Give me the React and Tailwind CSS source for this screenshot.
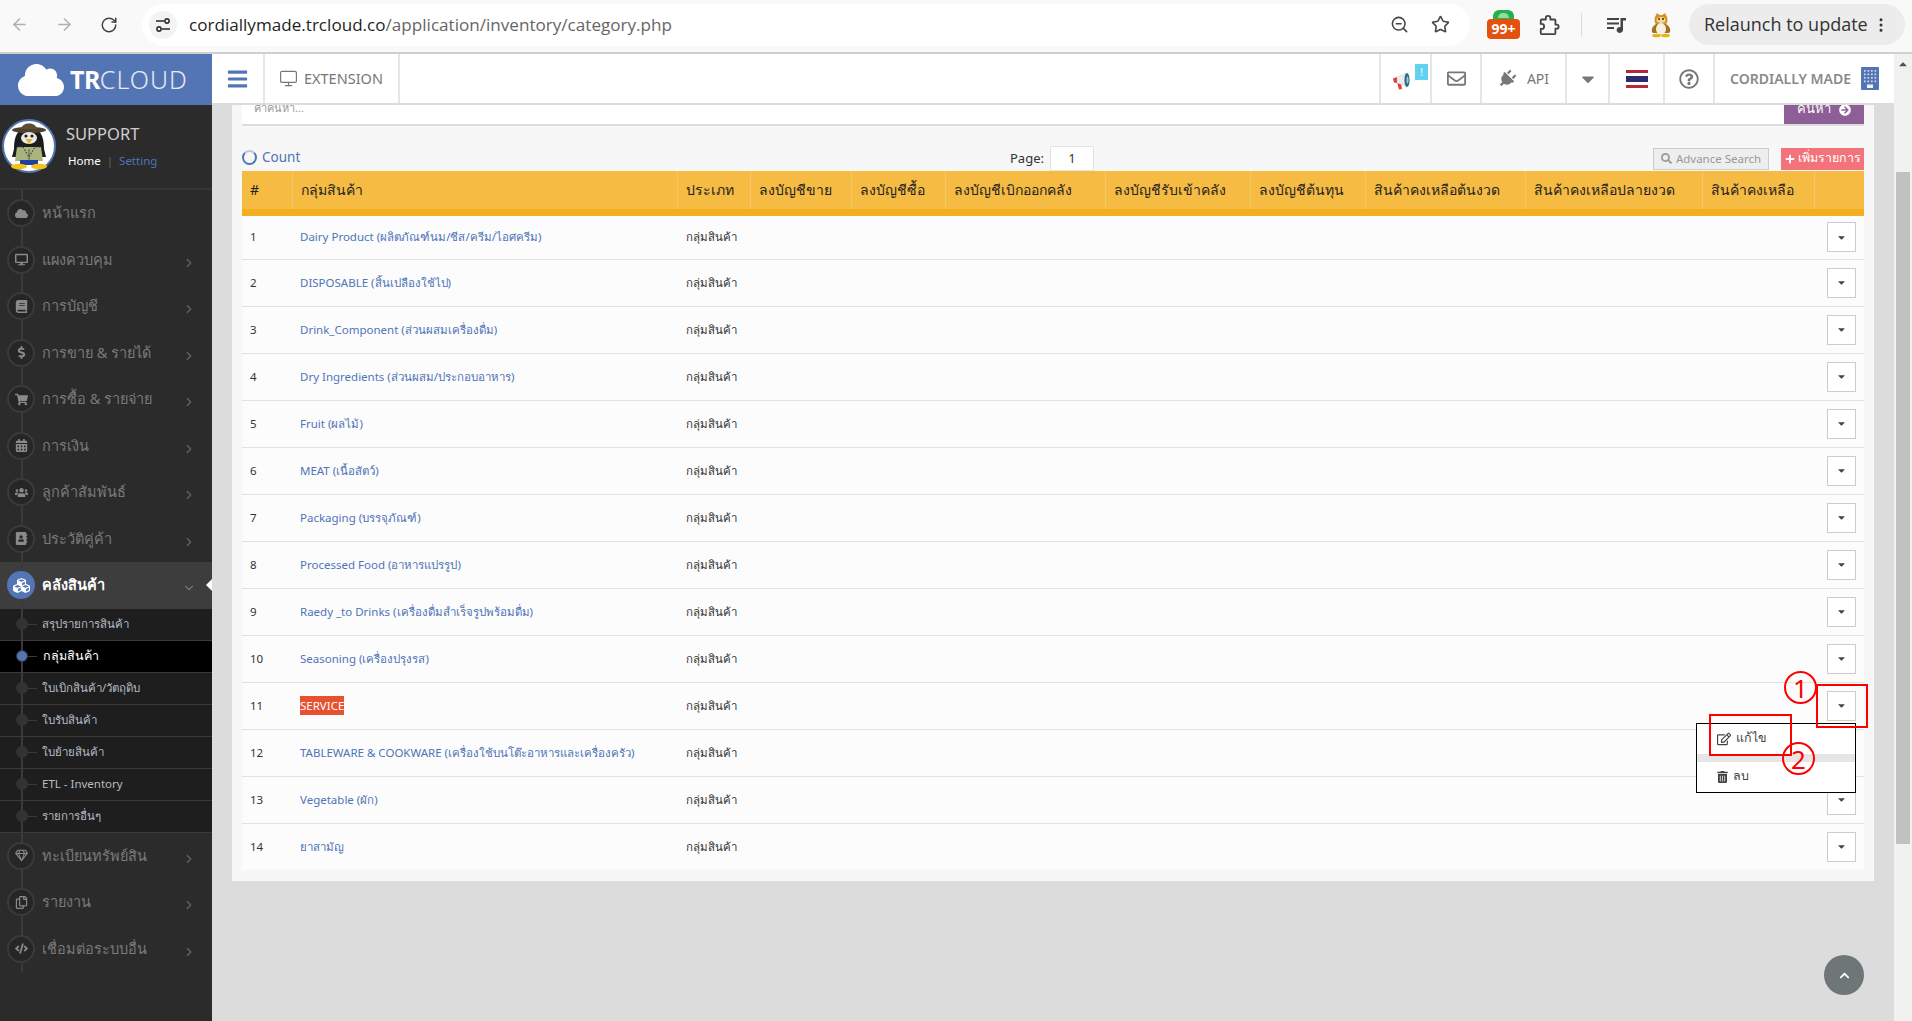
import React from 'react';
import {
  FaAddressBook, FaArrowCircleRight, FaBars, FaBook, FaCalendarAlt, FaCaretDown, FaChevronUp, FaCloud, FaCode,
  FaCubes, FaDollarSign, FaPlug, FaPlus, FaRegCopy, FaRegEdit, FaRegEnvelope, FaRegGem, FaRegQuestionCircle, FaSearch,
  FaShoppingCart, FaTrashAlt, FaUsers, FaDesktop, FaCaretUp,
} from 'react-icons/fa';
import { ArrowLeft, ArrowRight, ChevronDown, ChevronRight, EllipsisVertical, Monitor, RotateCw, Star, ZoomOut } from 'lucide-react';

const menuTop = [
  { label: 'หน้าแรก', icon: FaCloud, noArrow: true },
  { label: 'แผงควบคุม', icon: FaDesktop },
  { label: 'การบัญชี', icon: FaBook },
  { label: 'การขาย & รายได้', icon: FaDollarSign },
  { label: 'การซื้อ & รายจ่าย', icon: FaShoppingCart },
  { label: 'การเงิน', icon: FaCalendarAlt },
  { label: 'ลูกค้าสัมพันธ์', icon: FaUsers },
  { label: 'ประวัติคู่ค้า', icon: FaAddressBook },
];

const menuBottom = [
  { label: 'ทะเบียนทรัพย์สิน', icon: FaRegGem },
  { label: 'รายงาน', icon: FaRegCopy },
  { label: 'เชื่อมต่อระบบอื่น', icon: FaCode },
];

const subMenu = ['สรุปรายการสินค้า', 'กลุ่มสินค้า', 'ใบเบิกสินค้า/วัตถุดิบ', 'ใบรับสินค้า', 'ใบย้ายสินค้า', 'ETL - Inventory', 'รายการอื่นๆ'];

const columns = [
  { label: '#', w: 'w-[50px]' },
  { label: 'กลุ่มสินค้า', w: 'w-[385px]' },
  { label: 'ประเภท', w: 'w-[73px]' },
  { label: 'ลงบัญชีขาย', w: 'w-[101px]' },
  { label: 'ลงบัญชีซื้อ', w: 'w-[94px]' },
  { label: 'ลงบัญชีเบิกออกคลัง', w: 'w-[160px]' },
  { label: 'ลงบัญชีรับเข้าคลัง', w: 'w-[145px]' },
  { label: 'ลงบัญชีต้นทุน', w: 'w-[115px]' },
  { label: 'สินค้าคงเหลือต้นงวด', w: 'w-[160px]' },
  { label: 'สินค้าคงเหลือปลายงวด', w: 'w-[177px]' },
  { label: 'สินค้าคงเหลือ', w: 'w-[112px]' },
  { label: '', w: 'w-[50px]' },
];

const rows = [
  'Dairy Product (ผลิตภัณฑ์นม/ชีส/ครีม/ไอศครีม)',
  'DISPOSABLE (สิ้นเปลืองใช้ไป)',
  'Drink_Component (ส่วนผสมเครื่องดื่ม)',
  'Dry Ingredients (ส่วนผสม/ประกอบอาหาร)',
  'Fruit (ผลไม้)',
  'MEAT (เนื้อสัตว์)',
  'Packaging (บรรจุภัณฑ์)',
  'Processed Food (อาหารแปรรูป)',
  'Raedy _to Drinks (เครื่องดื่มสำเร็จรูปพร้อมดื่ม)',
  'Seasoning (เครื่องปรุงรส)',
  'SERVICE',
  'TABLEWARE & COOKWARE (เครื่องใช้บนโต๊ะอาหารและเครื่องครัว)',
  'Vegetable (ผัก)',
  'ยาสามัญ',
];

const Penguin = () => (
  <svg viewBox="0 0 54 54" className="h-[54px] w-[54px]">
    <circle cx="27" cy="27" r="26" fill="#fff" stroke="#5475b3" strokeWidth="2" />
    <path d="M12 30 C12 16 16 9 27 9 C38 9 42 16 42 30 L44 38 L10 38 Z" fill="#1c1c1c" />
    <ellipse cx="27" cy="11" rx="17" ry="3.2" fill="#4e412e" />
    <path d="M19 10 C20 2.5 34 2.5 35 10 Z" fill="#5e4e38" />
    <ellipse cx="27" cy="19" rx="8" ry="6" fill="#e9e9e9" />
    <circle cx="24" cy="17" r="1.6" fill="#222" />
    <circle cx="30" cy="17" r="1.6" fill="#222" />
    <path d="M23.5 20 L30.5 20 L27 25 Z" fill="#e8b21f" />
    <path d="M15 28 L39 28 L41 42 L13 42 Z" fill="#a9b37e" />
    <path d="M15 28 L21 28 L27 38 L33 28 L39 28" fill="none" stroke="#3c3c6a" strokeWidth="1.2" strokeDasharray="1.5 1.5" />
    <path d="M26.5 30 L27.5 30 L27.5 42 L26.5 42 Z" fill="#5c6640" />
    <rect x="18" y="41" width="18" height="5" fill="#1f3f9c" />
    <ellipse cx="17" cy="47.5" rx="8" ry="2.8" fill="#f3c315" />
    <ellipse cx="37" cy="47.5" rx="8" ry="2.8" fill="#f3c315" />
  </svg>
);

const AppBadge = () => (
  <div className="relative h-[29px] w-[33px]">
    <div className="absolute left-[6px] top-0 h-[12px] w-[21px] rounded-t-[6px] bg-[#22b14c]">
      <div className="mx-auto mt-[3px] h-[5px] w-[11px] rounded-t-full bg-[#8fdca4]" />
    </div>
    <div className="absolute bottom-0 left-0 flex h-[20px] w-[33px] items-center justify-center rounded-[4px] bg-[#e4510f] text-[14px] font-bold leading-none text-white">99+</div>
  </div>
);

const TuneIcon = () => (
  <svg viewBox="0 0 16 16" className="h-[16px] w-[16px]" fill="none" stroke="#333" strokeWidth="1.6">
    <path d="M1 4 H9" />
    <circle cx="12" cy="4" r="2.1" />
    <path d="M15 12 H7" />
    <circle cx="4" cy="12" r="2.1" />
  </svg>
);

const ExtensionIcon = () => (
  <svg viewBox="0 0 24 24" className="h-[22px] w-[22px]" fill="none" stroke="#444" strokeWidth="2" strokeLinejoin="round">
    <path d="M20.5 11.5H19V7c0-.6-.4-1-1-1h-4.5V4.5C13.500 3.100 12.400 2 11 2S8.500 3.100 8.500 4.500V6H4c-.6 0-1 .4-1 1v3.800h1c1.500 0 2.700 1.200 2.700 2.700s-1.200 2.700-2.700 2.700H3V21c0 .6.4 1 1 1h14c.6 0 1-.4 1-1v-5h1.500c1.100 0 2-.9 2-2.200s-.9-2.300-2-2.300z" />
  </svg>
);

const QueueMusicIcon = () => (
  <svg viewBox="0 0 20 18" className="h-[18px] w-[20px]" fill="#444">
    <rect x="0" y="2" width="12" height="2" />
    <rect x="0" y="6.500" width="12" height="2" />
    <rect x="0" y="11" width="7" height="2" />
    <path d="M13.500 2 H19 V4.500 H16 V13.500 A3.200 3 0 1 1 13.500 11 Z" />
  </svg>
);

const CatPenguin = () => (
  <svg viewBox="0 0 22 26" className="h-[26px] w-[22px]">
    <path d="M5 5 L7 1 L9.500 3 H12.500 L15 1 L17 5 C18 8 17.500 11 16 12 H6 C4.500 11 4 8 5 5 Z" fill="#d98f22" />
    <path d="M6 12 C1 15 1 20 3 21 H19 C21 20 21 15 16 12 Z" fill="#a5701f" />
    <ellipse cx="11" cy="17" rx="5" ry="6" fill="#f4f0e4" />
    <ellipse cx="11" cy="8" rx="4.500" ry="3" fill="#f3d88c" />
    <circle cx="9" cy="7" r="1" fill="#333" />
    <circle cx="13" cy="7" r="1" fill="#333" />
    <ellipse cx="6.500" cy="23.500" rx="4.500" ry="1.800" fill="#e9b318" />
    <ellipse cx="15.500" cy="23.500" rx="4.500" ry="1.800" fill="#e9b318" />
  </svg>
);

const Megaphone = () => (
  <svg viewBox="0 0 18 18" className="h-[18px] w-[18px]">
    <path d="M4 10 L8 11 L9 17 L6 17.500 Z" fill="#e53935" />
    <path d="M0 6.500 L4 5 L4 11 L1 10.500 Z" fill="#e53935" />
    <path d="M4 5 L13 1.500 L13 14 L4 11 Z" fill="#ececec" stroke="#bdbdbd" strokeWidth="0.400" />
    <ellipse cx="14" cy="8" rx="2.600" ry="7" fill="#2d6c88" />
    <ellipse cx="14.500" cy="8" rx="1" ry="3.500" fill="#a7c4d1" />
  </svg>
);

const ThaiFlag = () => (
  <svg viewBox="0 0 22 18" className="h-[18px] w-[22px]">
    <rect width="22" height="18" fill="#ffffff" />
    <rect width="22" height="3" fill="#b5283a" />
    <rect y="6" width="22" height="6" fill="#2d2a6e" />
    <rect y="15" width="22" height="3" fill="#b5283a" />
  </svg>
);

const BuildingIcon = () => (
  <svg viewBox="0 0 18 23" className="h-[23px] w-[18px]">
    <rect width="18" height="23" rx="1" fill="#5475b3" />
    {[3, 6.500, 10, 13.500].map((y) => [3, 6.500, 10, 13.500].map((x) => (
      <rect key={`${x}-${y}`} x={x} y={y} width="1.700" height="1.700" fill="#cdd8ec" />
    )))}
    <rect x="6" y="17.500" width="6" height="3.500" fill="#eef2f9" />
  </svg>
);

const Annotation = ({ n, className }) => (
  <div className={`absolute z-20 flex h-[33px] w-[33px] items-center justify-center rounded-full border-2 border-[#ff0000] text-[26px] leading-none text-[#ff0000] ${className}`}>{n}</div>
);

const BrowserBar = () => (
  <header className="flex h-[54px] shrink-0 items-center border-b-2 border-[#cfcfcf] bg-[#f9f9f9] pb-[3px] font-['Open_Sans',sans-serif]">
    <div className="flex w-[142px] items-center pl-[10px] text-[#b0b0b0]">
      <ArrowLeft size={19} />
      <ArrowRight size={19} className="ml-[26px]" />
      <RotateCw size={18} className="ml-[26px] text-[#444]" />
    </div>
    <div className="flex h-[42px] w-[1328px] items-center rounded-full bg-white pl-[7px] pr-[20px]">
      <span className="flex h-[28px] w-[28px] items-center justify-center rounded-full bg-[#f3f3f3]">
        <TuneIcon />
      </span>
      <span className="ml-[12px] flex-1 text-[17.100px] text-[#1f1f1f]">
        cordiallymade.trcloud.co<span className="text-[#666]">/application/inventory/category.php</span>
      </span>
      <ZoomOut size={19} className="text-[#444]" />
      <Star size={19} className="ml-[22px] text-[#444]" />
    </div>
    <div className="ml-[17px]"><AppBadge /></div>
    <div className="ml-[18px]"><ExtensionIcon /></div>
    <div className="ml-[21px] h-[24px] w-px bg-[#dcdcdc]" />
    <div className="ml-[25px]"><QueueMusicIcon /></div>
    <div className="ml-[23px]"><CatPenguin /></div>
    <div className="ml-[17px] flex h-[41px] w-[216px] items-center rounded-full bg-[#ececec] pl-[15px] text-[#333]">
      <span className="whitespace-nowrap text-[18px]">Relaunch to update</span>
      <EllipsisVertical size={18} className="ml-[4px] shrink-0" />
    </div>
  </header>
);

const Logo = () => (
  <div className="flex h-[51px] items-center bg-[#5475b3] pl-[18px] text-white">
    <FaCloud className="h-[38px] w-[46px]" />
    <span className="ml-[6px] text-[25px] leading-none font-bold tracking-[-0.5px]">TR</span>
    <span className="text-[25px] leading-none font-light tracking-[1px] text-[#e4eaf5]">CLOUD</span>
  </div>
);

const MenuItem = ({ item, active }) => {
  const Icon = item.icon;
  return (
    <div className={`relative flex h-[46.5px] items-center pl-[7px] ${active ? 'bg-[#3d3d3d]' : ''}`}>
      <div className="absolute bottom-0 left-[21px] top-0 w-[2px] bg-[#3a3a3a]" />
      <span className={`relative flex h-[28px] w-[28px] shrink-0 items-center justify-center rounded-full ${active ? 'bg-[#5475b3] text-[17px] text-white' : 'border-2 border-[#3a3a3a] bg-[#262626] text-[13px] text-[#8a8a8a]'}`}>
        <Icon />
      </span>
      <span className={`ml-[7px] flex-1 text-[14.5px] ${active ? 'font-semibold text-white' : 'text-[#7a7a7a]'}`}>{item.label}</span>
      {active && <ChevronDown size={14} className="mr-[16px] mt-[5px] text-[#777]" />}
      {!active && !item.noArrow && <ChevronRight size={14} className="mr-[16px] mt-[6px] text-[#666]" />}
      {active && <div className="absolute right-0 top-1/2 h-0 w-0 -translate-y-1/2 border-y-[6px] border-r-[6px] border-y-transparent border-r-white" />}
    </div>
  );
};

const Sidebar = () => (
  <aside className="flex w-[212px] shrink-0 flex-col bg-[#2b2b2b]">
    <Logo />
    <div className="flex h-[85px] items-center border-b-2 border-[#363636] pb-[2px] pl-[2px]">
      <Penguin />
      <div className="ml-[10px]">
        <div className="text-[16.500px] text-[#cfcfcf]">SUPPORT</div>
        <div className="mt-[5px] ml-[2px] text-[11.5px] text-white">Home <span className="mx-[3px] text-[#666]">|</span> <span className="text-[#4f74b8]">Setting</span></div>
      </div>
    </div>
    {menuTop.map((m) => <MenuItem key={m.label} item={m} />)}
    <MenuItem item={{ label: 'คลังสินค้า', icon: FaCubes }} active />
    <ul className="bg-[#1e1e1e]">
      {subMenu.map((s, i) => (
        <li key={s} className={`relative flex h-[32px] items-center border-b border-[#3a3a3a] pl-[42px] text-[11.5px] ${i === 1 ? 'bg-black pl-[43px] text-[12.5px] text-white' : 'text-[#b4bcc5]'}`}>
          <div className="absolute bottom-0 left-[21px] top-0 w-[2px] bg-[#3a3a3a]" />
          <div className="absolute left-[22px] top-1/2 h-px w-[15px] bg-[#3a3a3a]" />
          <div className={`absolute left-[16px] top-1/2 h-[12px] w-[12px] -translate-y-1/2 rounded-full ${i === 1 ? 'border border-[#333] bg-[#5475b3]' : 'bg-[#333]'}`} />
          {s}
        </li>
      ))}
    </ul>
    {menuBottom.map((m) => <MenuItem key={m.label} item={m} />)}
  </aside>
);

const NavCell = ({ className, children }) => (
  <div className={`flex h-full items-center justify-center border-l-2 border-[#e6e6e6] ${className}`}>{children}</div>
);

const TopNav = () => (
  <nav className="flex h-[51px] shrink-0 items-center border-b-2 border-[#dcdcdc] bg-white text-[#777]">
    <div className="flex w-[51px] justify-center text-[#5475b3]">
      <FaBars className="h-[22px] w-[21px]" />
    </div>
    <div className="flex h-full w-[137px] items-center border-x-2 border-[#e6e6e6] pl-[14px] text-[14.5px]">
      <Monitor size={19} strokeWidth={1.5} />
      <span className="ml-[6px]">EXTENSION</span>
    </div>
    <div className="flex-1" />
    <NavCell className="relative w-[51px]">
      <span className="mr-[8px] mt-[4px]"><Megaphone /></span>
      <span className="absolute left-[34px] top-[10px] flex h-[16px] w-[13px] items-center justify-center bg-[#62d2ee] text-[10px] text-white">!</span>
    </NavCell>
    <NavCell className="w-[50px]"><FaRegEnvelope className="h-[19px] w-[21px]" /></NavCell>
    <NavCell className="w-[85px] gap-[11px]">
      <FaPlug className="h-[18px] w-[18px] rotate-45" />
      <span className="text-[14px]">API</span>
    </NavCell>
    <NavCell className="w-[43px]"><FaCaretDown className="h-[20px] w-[20px]" /></NavCell>
    <NavCell className="w-[55px]"><ThaiFlag /></NavCell>
    <NavCell className="w-[50px]"><FaRegQuestionCircle className="h-[20px] w-[20px]" /></NavCell>
    <NavCell className="w-[181px] gap-[10px]">
      <span className="text-[14px] font-semibold text-[#8a8a8a]">CORDIALLY MADE</span>
      <BuildingIcon />
    </NavCell>
  </nav>
);

const Toolbar = () => (
  <div className="flex h-[45px] items-center pt-[20px]">
    <div className="-mt-[2px] flex w-[768px] items-center text-[13.5px] text-[#4f74b8]">
      <span className="h-[15px] w-[15px] rounded-full border-2 border-[#4f74b8] border-t-[#b9c9e4]" />
      <span className="ml-[5px]">Count</span>
    </div>
    <div className="flex items-center text-[13px] text-[#333]">
      <span>Page:</span>
      <span className="ml-[6px] flex h-[25px] w-[44px] items-center justify-center border border-[#e5e5e5] bg-white">1</span>
    </div>
    <div className="ml-auto flex items-center">
      <span className="flex h-[22px] w-[116px] items-center justify-center gap-[4px] border border-[#ccc] bg-[#eee] text-[11.5px] text-[#999]">
        <FaSearch className="h-[11px] w-[11px]" />
        Advance Search
      </span>
      <span className="ml-[12px] flex h-[22px] w-[83px] items-center justify-center gap-[3px] bg-[#f2737a] text-[12.5px] text-white">
        <FaPlus className="h-[10px] w-[10px]" />
        เพิ่มรายการ
      </span>
    </div>
  </div>
);

const CaretButton = () => (
  <span className="flex h-[30px] w-[29px] items-center justify-center border border-[#ccc] bg-white text-[#444]">
    <FaCaretDown className="h-[11px] w-[11px]" />
  </span>
);

const RowMenu = () => (
  <div className="absolute right-0 top-[32px] z-10 h-[70px] w-[160px] border border-black bg-white text-[12.5px] text-[#444]">
    <div className="flex h-[30px] items-center pl-[20px]">
      <FaRegEdit className="h-[14px] w-[14px]" />
      <span className="ml-[5px]">แก้ไข</span>
    </div>
    <div className="h-[8px] bg-[#e5e5e5]" />
    <div className="flex h-[30px] items-center pl-[20px]">
      <FaTrashAlt className="h-[12px] w-[11px]" />
      <span className="ml-[5px]">ลบ</span>
    </div>
  </div>
);

const CategoryTable = () => (
  <table className="w-[1622px] table-fixed bg-[#fcfcfc] text-[11.5px] text-[#333]">
    <thead>
      <tr className="h-[41px] border-b-[7px] border-[#f4af1f] bg-[#f6bb43] text-left text-[14px] text-[#222]">
        {columns.map((c, i) => (
          <th key={i} className={`${c.w} whitespace-nowrap border-l border-[#f8c765] pl-[8px] font-normal first:border-l-0`}>{c.label}</th>
        ))}
      </tr>
    </thead>
    <tbody>
      {rows.map((r, i) => (
        <tr key={r} className={`h-[47px] ${i < rows.length - 1 ? 'border-b border-[#e2e2e2]' : ''}`}>
          <td className="pl-[8px]">{i + 1}</td>
          <td className="pl-[8px] text-[#4f74b8]">
            {r === 'SERVICE' ? <span className="bg-[#e8512f] py-[2px] text-white">SERVICE</span> : r}
          </td>
          <td className="pl-[9px]">กลุ่มสินค้า</td>
          <td colSpan={8} />
          <td className="pl-[13px]">
            <div className="relative w-[29px]">
              <CaretButton />
              {i === 10 && <RowMenu />}
            </div>
          </td>
        </tr>
      ))}
    </tbody>
  </table>
);

const Scrollbar = () => (
  <div className="flex w-[18px] shrink-0 flex-col items-center bg-[#f1f1f1]">
    <FaCaretUp className="mt-[4px] h-[12px] w-[12px] text-[#505050]" />
    <div className="mt-[102px] h-[672px] w-[14px] bg-[#c1c1c1]" />
  </div>
);

const App = () => (
  <div className="relative flex h-[1021px] w-[1912px] flex-col overflow-hidden bg-[#dcdcdc] font-['Noto_Sans',sans-serif]">
    <BrowserBar />
    <div className="flex min-h-0 flex-1">
      <Sidebar />
      <div className="flex min-w-0 flex-1 flex-col">
        <TopNav />
        <main className="flex-1 px-[20px]">
          <div className="bg-[#f7f7f7] px-[10px] pb-[11px]">
            <div className="flex h-[21px] items-end justify-between overflow-hidden border-b-2 border-[#ddd] bg-white">
              <span className="pb-[8px] pl-[12px] text-[11px] text-[#999]">คำค้นหา...</span>
              <span className="flex h-[21px] w-[80px] items-end justify-center gap-[8px] bg-[#8e5f97] pb-[6px] text-[13px] text-white">
                ค้นหา <FaArrowCircleRight className="mb-[2px] h-[12px] w-[12px]" />
              </span>
            </div>
            <Toolbar />
            <CategoryTable />
          </div>
        </main>
      </div>
      <Scrollbar />
    </div>
    {/* annotations drawn on the screenshot */}
    <div className="absolute left-[1816px] top-[684px] z-20 h-[44px] w-[52px] border-2 border-[#ff0000]" />
    <div className="absolute left-[1709px] top-[714px] z-20 h-[42px] w-[83px] border-2 border-[#ff0000]" />
    <Annotation n="1" className="left-[1784px] top-[671px]" />
    <Annotation n="2" className="left-[1782px] top-[742px]" />
    <button className="absolute left-[1824px] top-[955px] flex h-[40px] w-[40px] items-center justify-center rounded-full bg-[#6f7678] text-white">
      <FaChevronUp className="h-[11px] w-[11px]" />
    </button>
  </div>
);

export default App;
